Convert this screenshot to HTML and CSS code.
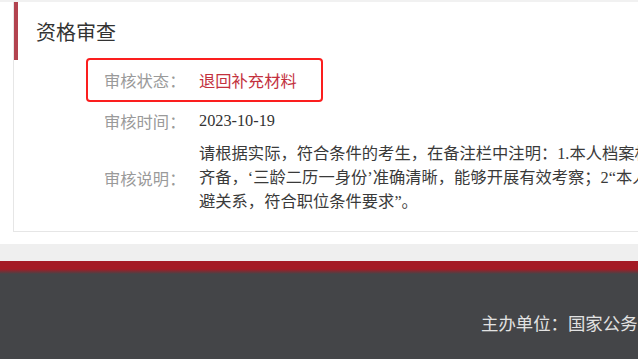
FILE: index.html
```html
<!DOCTYPE html>
<html lang="zh-CN">
<head>
<meta charset="utf-8">
<title>资格审查</title>
<link rel="stylesheet" href="styles.css">
</head>
<body>
<div class="topline"></div>
<section class="card">
  <h2 class="card-head">资格审查</h2>
  <div class="rows">
    <div class="row hl">
      <span class="label">审核状态：</span>
      <span class="status">退回补充材料</span>
    </div>
    <div class="row date">
      <span class="label">审核时间：</span>
      <span class="value">2023-10-19</span>
    </div>
    <div class="row note">
      <span class="label">审核说明：</span>
      <p class="value text">请根据实际，符合条件的考生，在备注栏中注明：1.本人档案材料及相关证明<br>齐备，‘三龄二历一身份’准确清晰，能够开展有效考察；2“本人与招录机关无回<br>避关系，符合职位条件要求”。</p>
    </div>
  </div>
</section>
<div class="band"></div>
<footer class="footer">
  <p class="footer-text">主办单位：国家公务员局</p>
</footer>
</body>
</html>
```
FILE: styles.css
```css
html, body {
  margin: 0;
  padding: 0;
  overflow: hidden;
  background: #fff;
  width: 638px;
  height: 359px;
}
body {
  font-family: "Liberation Serif", "Noto Sans CJK SC", serif;
  color: #333;
}
.topline {
  height: 2px;
  background: #f1f1f1;
}
.card {
  margin-left: 13px;
  width: 1000px;
  border-left: 1px solid #e6e6e6;
  border-bottom: 1px solid #e6e6e6;
  padding-bottom: 17px;
}
.card-head {
  margin: 0;
  height: 58px;
  box-sizing: border-box;
  border-left: 4px solid #b2434f;
  padding-left: 18px;
  display: flex;
  align-items: center;
  font-family: "Noto Sans CJK SC", sans-serif;
  font-weight: normal;
  font-size: 20px;
  color: #333;
}
.rows {
  padding-left: 72px;
}
.row {
  display: flex;
  align-items: center;
  padding-left: 18px;
  font-size: 16.3px;
  line-height: 24px;
}
.row.hl {
  margin-top: -2px;
  width: 237px;
  height: 44px;
  box-sizing: border-box;
  border: 2px solid #fb1e1e;
  border-radius: 4px;
  padding-left: 16px;
}
.row.date {
  margin-top: 7px;
}
.row.note {
  margin-top: 9px;
}
.label {
  width: 95px;
  flex: none;
  color: #9a9a9a;
  font-family: "Noto Sans CJK SC", sans-serif;
}
.status {
  color: #c3313e;
  font-family: "Noto Sans CJK SC", sans-serif;
  white-space: nowrap;
}
.value {
  color: #333;
  white-space: nowrap;
}
.text {
  margin: 0;
  color: #3a3a3a;
}
.band {
  margin-top: 12px;
  height: 17px;
  background: #efefef;
}
.footer {
  height: 99px;
  box-sizing: border-box;
  background: linear-gradient(#a41b25 0, #a41b25 8px, #444548 13px, #444548 100%);
  padding-top: 50px;
  padding-left: 481px;
}
.footer-text {
  margin: 0;
  font-family: "Noto Sans CJK SC", sans-serif;
  font-size: 17.4px;
  line-height: 24px;
  color: #e2e2e2;
  white-space: nowrap;
}
```
